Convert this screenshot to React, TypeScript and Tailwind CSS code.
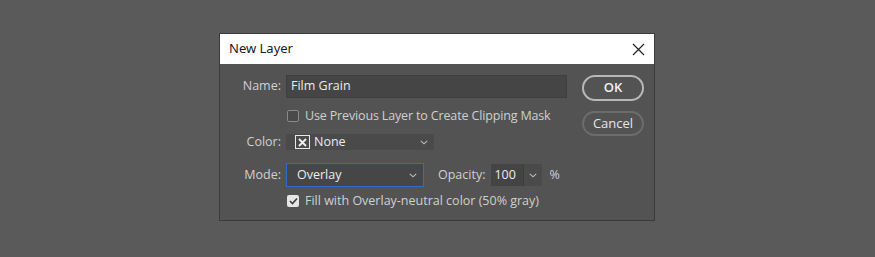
import React from 'react';

const Chevron: React.FC<{className?: string}> = ({className}) => (
    <svg className={className} width="8" height="5" viewBox="0 0 8 5" fill="none">
        <path d="M0.8 0.8 L4 3.8 L7.2 0.8" stroke="#bdbdbd" strokeWidth="1.1"/>
    </svg>
);

const App: React.FC = () => {
    return (
        <div className="w-full h-[257px] bg-[#5a5a5a] pt-[33px] pl-[219px] overflow-hidden" style={{fontFamily: '"Open Sans", "Noto Sans", sans-serif'}}>
            <div className="w-[436px] h-[188px] border border-[#3b3b3b] bg-[#535353] flex flex-col">
                {/* title bar */}
                <div className="h-[30px] bg-white flex items-center justify-between pl-[9px] pr-[9px] shrink-0">
                    <span className="text-[13px] text-[#1a1a1a]" style={{fontFamily: '"Noto Sans", sans-serif'}}>New Layer</span>
                    <svg width="13" height="13" viewBox="0 0 13 13">
                        <path d="M1 1 L12 12 M12 1 L1 12" stroke="#222" strokeWidth="1.2"/>
                    </svg>
                </div>

                <div className="flex flex-row">
                    {/* form */}
                    <div className="w-[362px] flex flex-col text-[12.5px] text-[#d0d0d0]">
                        <div className="flex items-center mt-[11px] h-[23px]">
                            <span className="w-[61px] text-right">Name:</span>
                            <div className="ml-[5px] w-[281px] h-[23px] bg-[#454545] border border-[#3f3f3f] flex items-center pl-[4px] text-[#ececec]">
                                Film Grain
                            </div>
                        </div>

                        <div className="flex items-center mt-[6px] h-[24px] pl-[67px]">
                            <span className="w-[12px] h-[12px] rounded-[2px] border border-[#8a8a8a] bg-[#4a4a4a]"></span>
                            <span className="ml-[6px] tracking-[-0.15px]">Use Previous Layer to Create Clipping Mask</span>
                        </div>

                        <div className="flex items-center mt-[2px] h-[24px]">
                            <span className="w-[61px] text-right">Color:</span>
                            <div className="ml-[5px] w-[148px] h-[16px] bg-[#4a4a4a] flex items-center pl-[9px] pr-[6px] text-[#ececec]">
                                <span className="w-[15px] h-[14px] border border-[#e8e8e8] flex items-center justify-center">
                                    <svg width="9" height="9" viewBox="0 0 9 9">
                                        <path d="M1 1 L8 8 M8 1 L1 8" stroke="#f0f0f0" strokeWidth="1.8"/>
                                    </svg>
                                </span>
                                <span className="ml-[4px]">None</span>
                                <Chevron className="ml-auto"/>
                            </div>
                        </div>

                        <div className="flex items-center mt-[9px] h-[24px]">
                            <span className="w-[61px] text-right">Mode:</span>
                            <div className="ml-[5px] w-[138px] h-[24px] bg-[#464646] border border-[#2f6ec6] flex items-center pl-[10px] pr-[6px] text-[#ececec]">
                                <span>Overlay</span>
                                <Chevron className="ml-auto"/>
                            </div>
                            <span className="ml-[14px]">Opacity:</span>
                            <div className="ml-[6px] h-[22px] flex">
                                <div className="w-[32px] bg-[#444444] flex items-center pl-[3px] text-[#ececec]">100</div>
                                <div className="w-[19px] bg-[#4a4a4a] border-l border-[#3d3d3d] flex items-center justify-center">
                                    <Chevron/>
                                </div>
                            </div>
                            <span className="ml-[7px]">%</span>
                        </div>

                        <div className="flex items-center mt-[3px] h-[22px] pl-[67px]">
                            <span className="w-[12px] h-[12px] rounded-[2px] bg-[#e6e6e6] flex items-center justify-center">
                                <svg width="9" height="8" viewBox="0 0 9 8">
                                    <path d="M1 4 L3.5 6.5 L8 1.5" stroke="#3a3a3a" strokeWidth="1.6" fill="none"/>
                                </svg>
                            </span>
                            <span className="ml-[6px]">Fill with Overlay-neutral color (50% gray)</span>
                        </div>
                    </div>

                    {/* buttons */}
                    <div className="flex flex-col pt-[11px] text-[13px]">
                        <button className="w-[62px] h-[26px] rounded-full border-2 border-[#b8b8b8] text-[#f0f0f0] font-semibold">OK</button>
                        <button className="mt-[10px] w-[62px] h-[25px] rounded-full border-2 border-[#6c6c6c] text-[#e6e6e6]">Cancel</button>
                    </div>
                </div>
            </div>
        </div>
    );
};

export default App;
